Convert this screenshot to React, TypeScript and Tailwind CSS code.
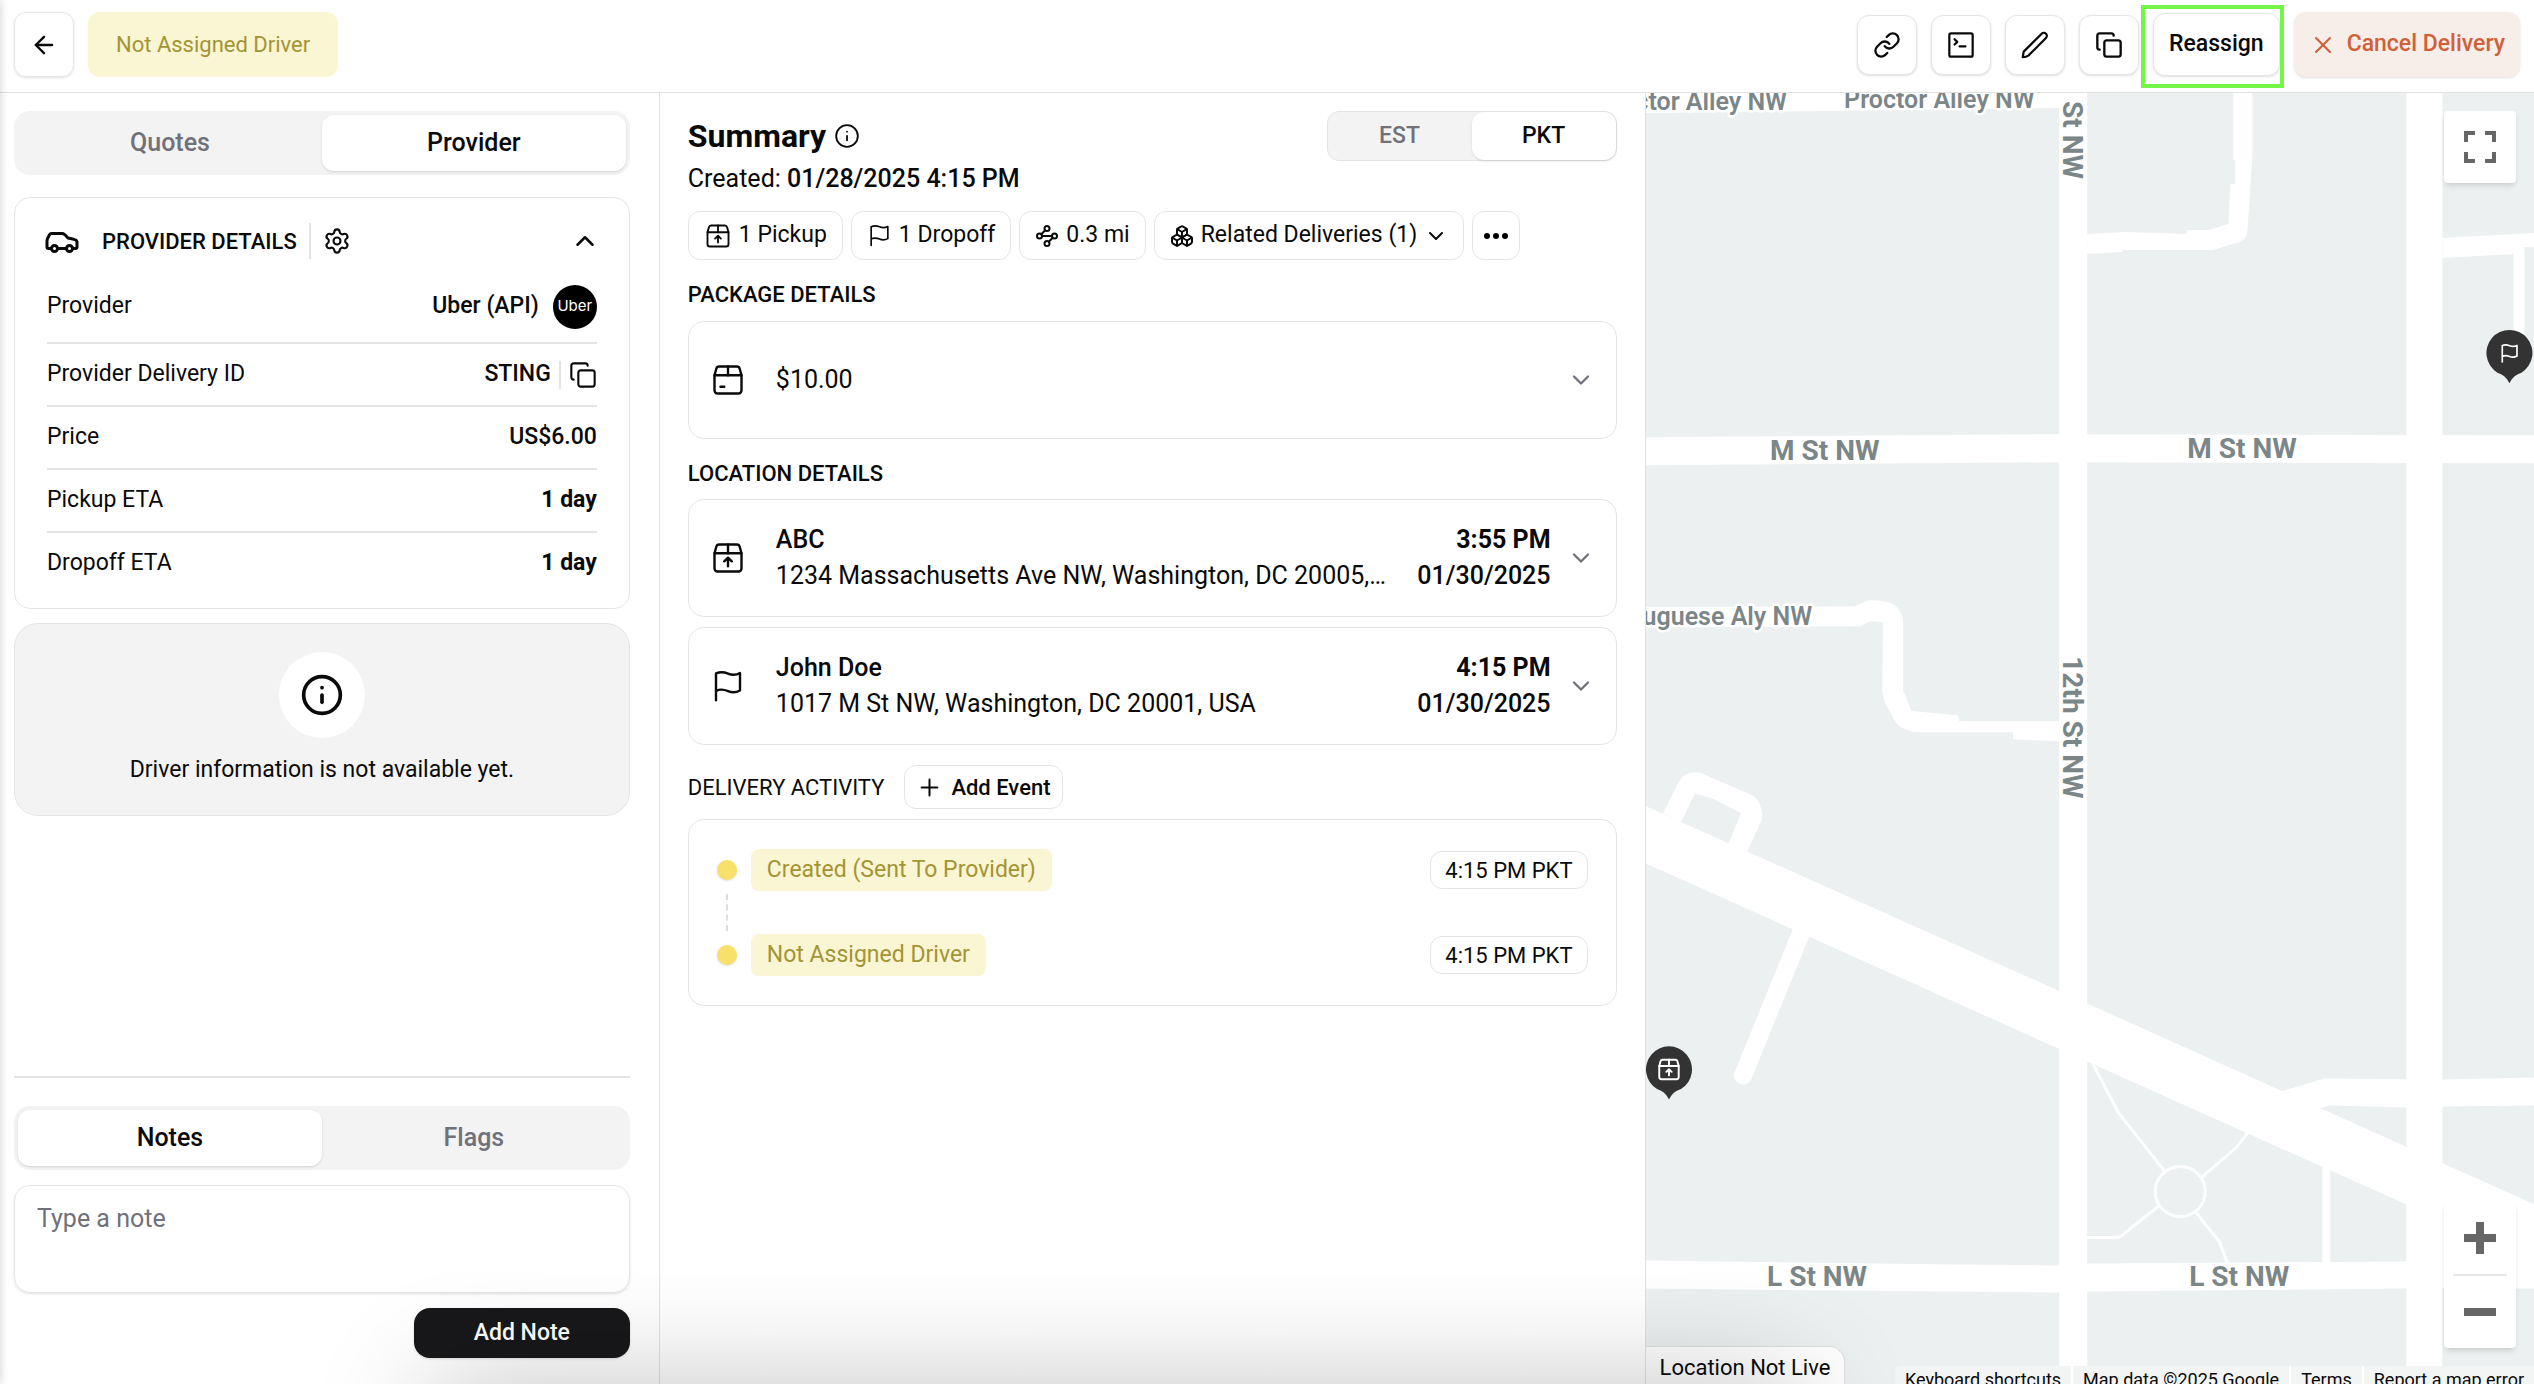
import { useState, type ReactNode } from 'react';
import { clsx } from 'clsx';
import {
  ArrowLeft,
  Boxes,
  Car,
  ChevronDown,
  ChevronUp,
  Copy,
  Info,
  Link,
  Plus,
  Settings,
  Waypoints,
  X,
} from 'lucide-react';

type IconProps = { size: number };

function StrokeIcon({ size, children }: IconProps & { children: ReactNode }) {
  return (
    <svg
      width={size}
      height={size}
      viewBox="0 0 24 24"
      fill="none"
      stroke="currentColor"
      strokeWidth="1.6"
      strokeLinecap="round"
      strokeLinejoin="round"
      className="shrink-0"
      aria-hidden="true"
    >
      {children}
    </svg>
  );
}

const boxOutline = (
  <>
    <path d="M3 8.8V19a2 2 0 0 0 2 2h14a2 2 0 0 0 2-2V8.8" />
    <path d="M3 8.8l1.2-4.3A2 2 0 0 1 6.1 3h11.8a2 2 0 0 1 1.9 1.5L21 8.8z" />
    <path d="M12 3v5.8" />
  </>
);

const flagPath =
  'M4 21.5V3.6c2.8-1.2 5.2-1.1 8 .1s5.2 1.2 8-.3V15c-2.8 1.5-5.2 1.6-8 .4s-5.2-1.4-8-.2';

function PickupIcon({ size }: IconProps) {
  return (
    <StrokeIcon size={size}>
      {boxOutline}
      <path d="M12 17.5v-5.5M9.5 14.2l2.5-2.4 2.5 2.4" />
    </StrokeIcon>
  );
}

function PackageIcon({ size }: IconProps) {
  return (
    <StrokeIcon size={size}>
      {boxOutline}
      <path d="M7 16.5h2.5" />
    </StrokeIcon>
  );
}

function FlagIcon({ size }: IconProps) {
  return (
    <StrokeIcon size={size}>
      <path d={flagPath} />
    </StrokeIcon>
  );
}

function TerminalIcon({ size }: IconProps) {
  return (
    <StrokeIcon size={size}>
      <g strokeWidth="1.9">
        <rect x="2" y="2" width="20" height="20" rx="1.5" />
        <path d="M6.5 7l2.3 2.3-2.3 2.3M10.8 13.2h5" />
      </g>
    </StrokeIcon>
  );
}

function PencilIcon({ size }: IconProps) {
  return (
    <StrokeIcon size={size}>
      <path
        d="M1.5 22.5l.8-4.8L17.7 2.3a2.5 2.5 0 0 1 3.7 3.7L6.3 21.1c-1.5 1-3.2 1.3-4.8 1.4z"
        strokeWidth="1.9"
      />
    </StrokeIcon>
  );
}

const iconButton =
  'flex size-[60px] items-center justify-center rounded-xl border border-[#e5e5e5] bg-white shadow-sm';

function Header() {
  return (
    <header className="flex h-[93px] shrink-0 items-center justify-between border-b border-[#e2e2e2] px-[14px] pb-[3px]">
      <div className="flex items-center gap-[14px]">
        <button
          type="button"
          aria-label="Back"
          className="flex h-[65px] w-[60px] items-center justify-center rounded-xl border border-[#e5e5e5] shadow-sm"
        >
          <ArrowLeft size={28} />
        </button>
        <span className="flex h-[65px] items-center rounded-xl bg-[#faf5d3] px-7 text-[22px] text-[#a39434]">
          Not Assigned Driver
        </span>
      </div>

      <div className="flex items-center gap-[14px]">
        <button type="button" aria-label="Copy link" className={iconButton}>
          <Link size={28} />
        </button>
        <button type="button" aria-label="Open console" className={iconButton}>
          <TerminalIcon size={28} />
        </button>
        <button type="button" aria-label="Edit" className={iconButton}>
          <PencilIcon size={28} />
        </button>
        <button type="button" aria-label="Duplicate" className={iconButton}>
          <Copy size={28} />
        </button>
        <div className="relative">
          <button
            type="button"
            className="h-[63px] rounded-xl border border-[#e5e5e5] bg-white px-[15px] text-[23px] font-medium shadow-sm"
          >
            Reassign
          </button>
          <span className="pointer-events-none absolute -top-2 -right-1 -bottom-3 -left-3 border-4 border-[#73f549]" />
        </div>
        <button
          type="button"
          className="flex h-[65px] items-center gap-[10px] rounded-xl bg-[#f8eee9] px-[15px] text-[23px] font-medium text-[#d0603a] shadow-sm"
        >
          <X size={28} strokeWidth={1.8} />
          Cancel Delivery
        </button>
      </div>
    </header>
  );
}

function Tabs({ items, initial }: { items: string[]; initial: string }) {
  const [active, setActive] = useState(initial);

  return (
    <div role="tablist" className="flex h-16 rounded-2xl bg-[#f3f3f3] p-1">
      {items.map((item) => (
        <button
          key={item}
          type="button"
          role="tab"
          aria-selected={item === active}
          onClick={() => setActive(item)}
          className={clsx(
            'flex-1 rounded-xl text-[25px] font-medium',
            item === active ? 'bg-white shadow' : 'text-[#71717a]'
          )}
        >
          {item}
        </button>
      ))}
    </div>
  );
}

function DetailRow({ label, children }: { label: string; children: ReactNode }) {
  return (
    <div className="flex h-[63px] items-center justify-between border-b-2 border-[#e4e4e4] first:h-[81px] first:pt-2 last:h-[61px] last:border-b-0">
      <dt>{label}</dt>
      <dd className="flex items-center font-medium">{children}</dd>
    </div>
  );
}

function Sidebar() {
  return (
    <aside className="flex w-[26%] shrink-0 flex-col px-[14px] pt-[18px] pr-[29px] pb-[26px]">
      <Tabs items={['Quotes', 'Provider']} initial="Provider" />

      <section className="mt-[22px] rounded-2xl border border-[#e5e5e5] pt-[21px] pb-[14px]">
        <div className="flex h-11 items-center px-[29px]">
          <Car size={36} />
          <h2 className="ml-[22px] text-[22px] font-medium">PROVIDER DETAILS</h2>
          <span className="mx-3 h-9 w-[2px] bg-[#e4e4e4]" />
          <button type="button" aria-label="Provider settings">
            <Settings size={28} strokeWidth={1.8} />
          </button>
          <button type="button" aria-label="Collapse" className="ml-auto">
            <ChevronUp size={30} />
          </button>
        </div>
        <dl className="px-8 text-[23px]">
          <DetailRow label="Provider">
            Uber (API)
            <span className="ml-[14px] flex size-11 items-center justify-center rounded-full bg-black font-['Inter'] text-[15px] font-normal text-white">
              Uber
            </span>
          </DetailRow>
          <DetailRow label="Provider Delivery ID">
            STING
            <span className="mx-2 h-7 w-[2px] bg-[#e4e4e4]" />
            <button type="button" aria-label="Copy delivery ID">
              <Copy size={28} strokeWidth={1.8} />
            </button>
          </DetailRow>
          <DetailRow label="Price">US$6.00</DetailRow>
          <DetailRow label="Pickup ETA">
            <span className="font-bold">1 day</span>
          </DetailRow>
          <DetailRow label="Dropoff ETA">
            <span className="font-bold">1 day</span>
          </DetailRow>
        </dl>
      </section>

      <section className="mt-[14px] flex flex-col items-center rounded-3xl border border-[#e5e5e5] bg-[#f3f3f3] pt-7 pb-[29px]">
        <span className="flex size-[86px] items-center justify-center rounded-full bg-white">
          <Info size={44} />
        </span>
        <p className="mt-4 text-[23px] leading-[32px]">Driver information is not available yet.</p>
      </section>

      <div className="mt-auto border-t-2 border-[#e4e4e4] pt-7">
        <Tabs items={['Notes', 'Flags']} initial="Notes" />
        <textarea
          aria-label="Note"
          placeholder="Type a note"
          className="mt-[15px] block h-[108px] w-full resize-none rounded-2xl border border-[#e5e5e5] px-[22px] py-[15px] text-[25px] leading-[36px] shadow-sm placeholder:text-[#71717a]"
        />
        <div className="mt-[15px] flex justify-end">
          <button
            type="button"
            className="h-[50px] w-[216px] rounded-2xl bg-[#18181a] text-[23px] font-medium text-white shadow-sm"
          >
            Add Note
          </button>
        </div>
      </div>
    </aside>
  );
}

const chip = 'flex h-[49px] items-center gap-[7px] rounded-xl border border-[#e5e5e5] px-[15px]';

type LocationCardProps = {
  icon: ReactNode;
  name: string;
  address: string;
  time: string;
  date: string;
};

function LocationCard({ icon, name, address, time, date }: LocationCardProps) {
  return (
    <button
      type="button"
      className="flex h-[118px] w-full items-center rounded-2xl border border-[#e5e5e5] px-[21px] text-left text-[25px] leading-[36px]"
    >
      {icon}
      <span className="ml-[30px] min-w-0 flex-1">
        <span className="block font-medium">{name}</span>
        <span className="block truncate">{address}</span>
      </span>
      <span className="ml-7 text-right font-medium">
        <span className="block font-bold">{time}</span>
        <span className="block">{date}</span>
      </span>
      <ChevronDown size={28} className="ml-4 shrink-0 text-[#71717a]" />
    </button>
  );
}

function ActivityRow({ status, time }: { status: string; time: string }) {
  return (
    <li className="flex h-[42px] items-center">
      <span className="size-5 rounded-full bg-[#f8e06b] shadow-sm" />
      <span className="ml-[14px] flex h-full items-center rounded-lg bg-[#faf5d3] px-4 text-[23px] text-[#a39434]">
        {status}
      </span>
      <time className="ml-auto flex h-[38px] items-center rounded-xl border border-[#e5e5e5] px-[14px] text-[22px]">
        {time}
      </time>
    </li>
  );
}

function Summary() {
  const [zone, setZone] = useState('PKT');

  return (
    <main className="w-[38.9%] shrink-0 border-l border-[#e2e2e2] px-7 pt-[18px]">
      <div className="flex h-[50px] items-center justify-between">
        <h1 className="flex items-center gap-2 text-[32px] font-bold">
          Summary
          <Info size={26} strokeWidth={1.7} />
        </h1>
        <div role="tablist" className="flex h-full w-[290px] rounded-xl border border-[#e5e5e5] bg-[#f3f3f3]">
          {['EST', 'PKT'].map((item) => (
            <button
              key={item}
              type="button"
              role="tab"
              aria-selected={item === zone}
              onClick={() => setZone(item)}
              className={clsx(
                'flex-1 rounded-xl text-[23px] font-medium',
                item === zone ? 'bg-white shadow' : 'text-[#71717a]'
              )}
            >
              {item}
            </button>
          ))}
        </div>
      </div>
      <p className="text-[25px] leading-[36px]">
        Created: <span className="font-medium">01/28/2025 4:15 PM</span>
      </p>

      <div className="mt-[14px] flex gap-2 text-[23px]">
        <span className={chip}>
          <PickupIcon size={28} />1 Pickup
        </span>
        <span className={chip}>
          <FlagIcon size={25} />1 Dropoff
        </span>
        <span className={chip}>
          <Waypoints size={24} />
          0.3 mi
        </span>
        <button type="button" className={chip}>
          <Boxes size={24} />
          Related Deliveries (1)
          <ChevronDown size={24} />
        </button>
        <button
          type="button"
          aria-label="More"
          className="flex h-[49px] w-12 items-center justify-center gap-[3px] rounded-xl border border-[#e5e5e5]"
        >
          <span className="size-[6px] rounded-full bg-black" />
          <span className="size-[6px] rounded-full bg-black" />
          <span className="size-[6px] rounded-full bg-black" />
        </button>
      </div>

      <h2 className="mt-5 text-[22px] leading-[30px] font-medium">PACKAGE DETAILS</h2>
      <button
        type="button"
        className="mt-[11px] flex h-[118px] w-full items-center rounded-2xl border border-[#e5e5e5] px-[21px] text-[25px]"
      >
        <PackageIcon size={36} />
        <span className="ml-[30px]">$10.00</span>
        <ChevronDown size={28} className="ml-auto text-[#71717a]" />
      </button>

      <h2 className="mt-5 text-[22px] leading-[30px] font-medium">LOCATION DETAILS</h2>
      <div className="mt-[10px] flex flex-col gap-[10px]">
        <LocationCard
          icon={<PickupIcon size={36} />}
          name="ABC"
          address="1234 Massachusetts Ave NW, Washington, DC 20005, USA"
          time="3:55 PM"
          date="01/30/2025"
        />
        <LocationCard
          icon={<FlagIcon size={36} />}
          name="John Doe"
          address="1017 M St NW, Washington, DC 20001, USA"
          time="4:15 PM"
          date="01/30/2025"
        />
      </div>

      <div className="mt-5 flex items-center gap-5">
        <h2 className="text-[22px]">DELIVERY ACTIVITY</h2>
        <button
          type="button"
          className="flex h-11 items-center gap-2 rounded-xl border border-[#e5e5e5] px-[11px] text-[22px] font-medium"
        >
          <Plus size={27} strokeWidth={1.8} />
          Add Event
        </button>
      </div>
      <ul className="mt-[10px] rounded-2xl border border-[#e5e5e5] px-7 py-[29px]">
        <ActivityRow status="Created (Sent To Provider)" time="4:15 PM PKT" />
        <li aria-hidden="true" className="my-[3px] ml-[9px] h-[37px] border-l-2 border-dashed border-[#dddddd]" />
        <ActivityRow status="Not Assigned Driver" time="4:15 PM PKT" />
      </ul>
    </main>
  );
}

function Pin({ x, y, children }: { x: number; y: number; children: ReactNode }) {
  return (
    <g transform={`translate(${x} ${y})`}>
      <path
        d="M0 30C-3 24-7 21-12 19.5a23 23 0 1 1 24 0C7 21 3 24 0 30z"
        fill="#333333"
      />
      <g
        transform="translate(-13 -13) scale(1.08)"
        fill="none"
        stroke="#ffffff"
        strokeWidth="1.8"
        strokeLinecap="round"
        strokeLinejoin="round"
      >
        {children}
      </g>
    </g>
  );
}

function StreetMap() {
  return (
    <svg
      viewBox="0 0 888 1291"
      preserveAspectRatio="xMinYMin slice"
      className="absolute inset-0 size-full"
      role="img"
      aria-label="Map of pickup and dropoff"
    >
      <rect width="888" height="1291" fill="#ecf0f1" />

      <g fill="#ffffff">
        <path d="M413 0h28v1291h-28zM760 0h36v1291h-36z" />
        <path d="M0 0h414v15L0 20z" />
        <path d="M0 344l413-3 475 1v28l-475-1L0 372z" />
        <path d="M587 0h19v64l-5 76q-1 6-8 9l-26 8h-91v2l-35 2v-20l38-2 61 2 1-4h22l19-6 2-40h5V67h-2z" />
        <path d="M796 145l92-5v14h-10v96h-11v-89l-71 4z" />
        <path d="M0 514l209-1 13-6q26-1 31 10 4 5 4 10v70l8 20 4 1 43 4 1 6h100v20l-46-2v-7h-94q-8 0-11-2-10-3-13-9l-10-18-3-12 1-69-13-1-9 5-215 1z" />
        <path d="M0 713l441 197 447 201v82H760v-82L441 968 0 770z" />
        <path
          fillRule="evenodd"
          d="M17 720l15-30q5-11 17-11 6 0 11 3l46 20q6 3 8 10 4 10 1 16l-14 31-66-30zM35 729l47 22 13-31-27-14-19-6z"
        />
        <path d="M635 998l43-13 118 1 92-2v28l-92 1-36 1-77-2-10 3z" />
        <path d="M676 1074h8v96h-8z" />
        <path d="M0 1167l308 4 105 1 28-2 317-2h130v27l-130 0-317 3-28 1-105-1-308-3z" />
      </g>

      <g fill="none" stroke="#ffffff" strokeLinecap="round">
        <path d="M158 832L97 982" strokeWidth="18" />
        <g strokeWidth="3">
          <path d="M447 971l25 48 45 57M601 1040l-11 14-35 30M513 1112l-34 27q-4 5-9 5h-29M549 1118l24 30 8 21" />
          <circle cx="534" cy="1098" r="25" />
        </g>
      </g>

      <g
        fill="#7b8688"
        stroke="#ffffff"
        strokeWidth="5"
        strokeLinejoin="round"
        paintOrder="stroke"
        fontFamily="Roboto, sans-serif"
        fontWeight="600"
        fontSize="25"
      >
        <text x="141" y="17" textAnchor="end">Proctor Alley NW</text>
        <text x="198" y="15">Proctor Alley NW</text>
        <text x="166" y="532" textAnchor="end">Portuguese Aly NW</text>
        <g fontSize="28" fontWeight="700">
          <text x="124" y="367">M St NW</text>
          <text x="541" y="365">M St NW</text>
          <text x="121" y="1192">L St NW</text>
          <text x="543" y="1192">L St NW</text>
          <text transform="translate(417 86) rotate(90)" textAnchor="end">12th St NW</text>
          <text transform="translate(417 563) rotate(90)">12th St NW</text>
        </g>
      </g>

      <Pin x={863} y={260}>
        <path d={flagPath} transform="translate(2 2) scale(0.85)" />
      </Pin>
      <Pin x={23} y={976}>
        {boxOutline}
        <path d="M12 17.5v-5.5M9.5 14.2l2.5-2.4 2.5 2.4" />
      </Pin>
    </svg>
  );
}

function MapPanel() {
  return (
    <section className="relative flex-1 overflow-hidden border-l border-[#e2e2e2]">
      <StreetMap />

      <button
        type="button"
        aria-label="Toggle fullscreen"
        className="absolute top-[18px] right-[18px] flex size-[72px] items-center justify-center rounded-[4px] bg-white shadow-md"
      >
        <svg width="32" height="32" viewBox="0 0 32 32" fill="none" stroke="#666666" strokeWidth="4">
          <path d="M2 11V2h9M21 2h9v9M30 21v9h-9M11 30H2v-9" />
        </svg>
      </button>

      <div className="absolute right-[18px] bottom-9 flex w-[72px] flex-col items-center rounded-[4px] bg-white shadow-md">
        <button type="button" aria-label="Zoom in" className="flex h-[72px] w-full items-center justify-center">
          <svg width="32" height="32" viewBox="0 0 32 32" fill="#666666">
            <path d="M12 0h8v12h12v8H20v12h-8V20H0v-8h12z" />
          </svg>
        </button>
        <span className="h-[2px] w-[54px] bg-[#e6e6e6]" />
        <button type="button" aria-label="Zoom out" className="flex h-[72px] w-full items-center justify-center">
          <svg width="32" height="8" viewBox="0 0 32 8" fill="#666666">
            <path d="M0 0h32v8H0z" />
          </svg>
        </button>
      </div>

      <p className="absolute bottom-0 left-0 flex h-[38px] items-center rounded-tr-2xl border-t border-r border-[#e0e0e0] bg-white px-[14px] pt-1 text-[22px]">
        Location Not Live
      </p>

      <div className="absolute right-0 -bottom-2 flex h-[26px] items-center divide-x-2 divide-white bg-[#f3f4f4] text-[18px]">
        <button type="button" className="px-[10px]">Keyboard shortcuts</button>
        <span className="px-[10px]">Map data ©2025 Google</span>
        <a href="#terms" className="px-[10px]">Terms</a>
        <a href="#report" className="px-[10px]">Report a map error</a>
      </div>
    </section>
  );
}

export default function App() {
  return (
    <div className="relative flex h-screen flex-col overflow-hidden bg-white font-['Roboto',sans-serif] text-[#0a0a0a]">
      <Header />
      <div className="flex min-h-0 flex-1">
        <Sidebar />
        <Summary />
        <MapPanel />
      </div>

      {/* edge shadows */}
      <span className="pointer-events-none absolute inset-y-0 -left-2 w-2 shadow-[0_0_10px_rgba(0,0,0,0.2)]" />
      <span className="pointer-events-none absolute top-full right-[29%] left-[17%] h-40 shadow-[0_0_120px_rgba(0,0,0,0.24)]" />
    </div>
  );
}
